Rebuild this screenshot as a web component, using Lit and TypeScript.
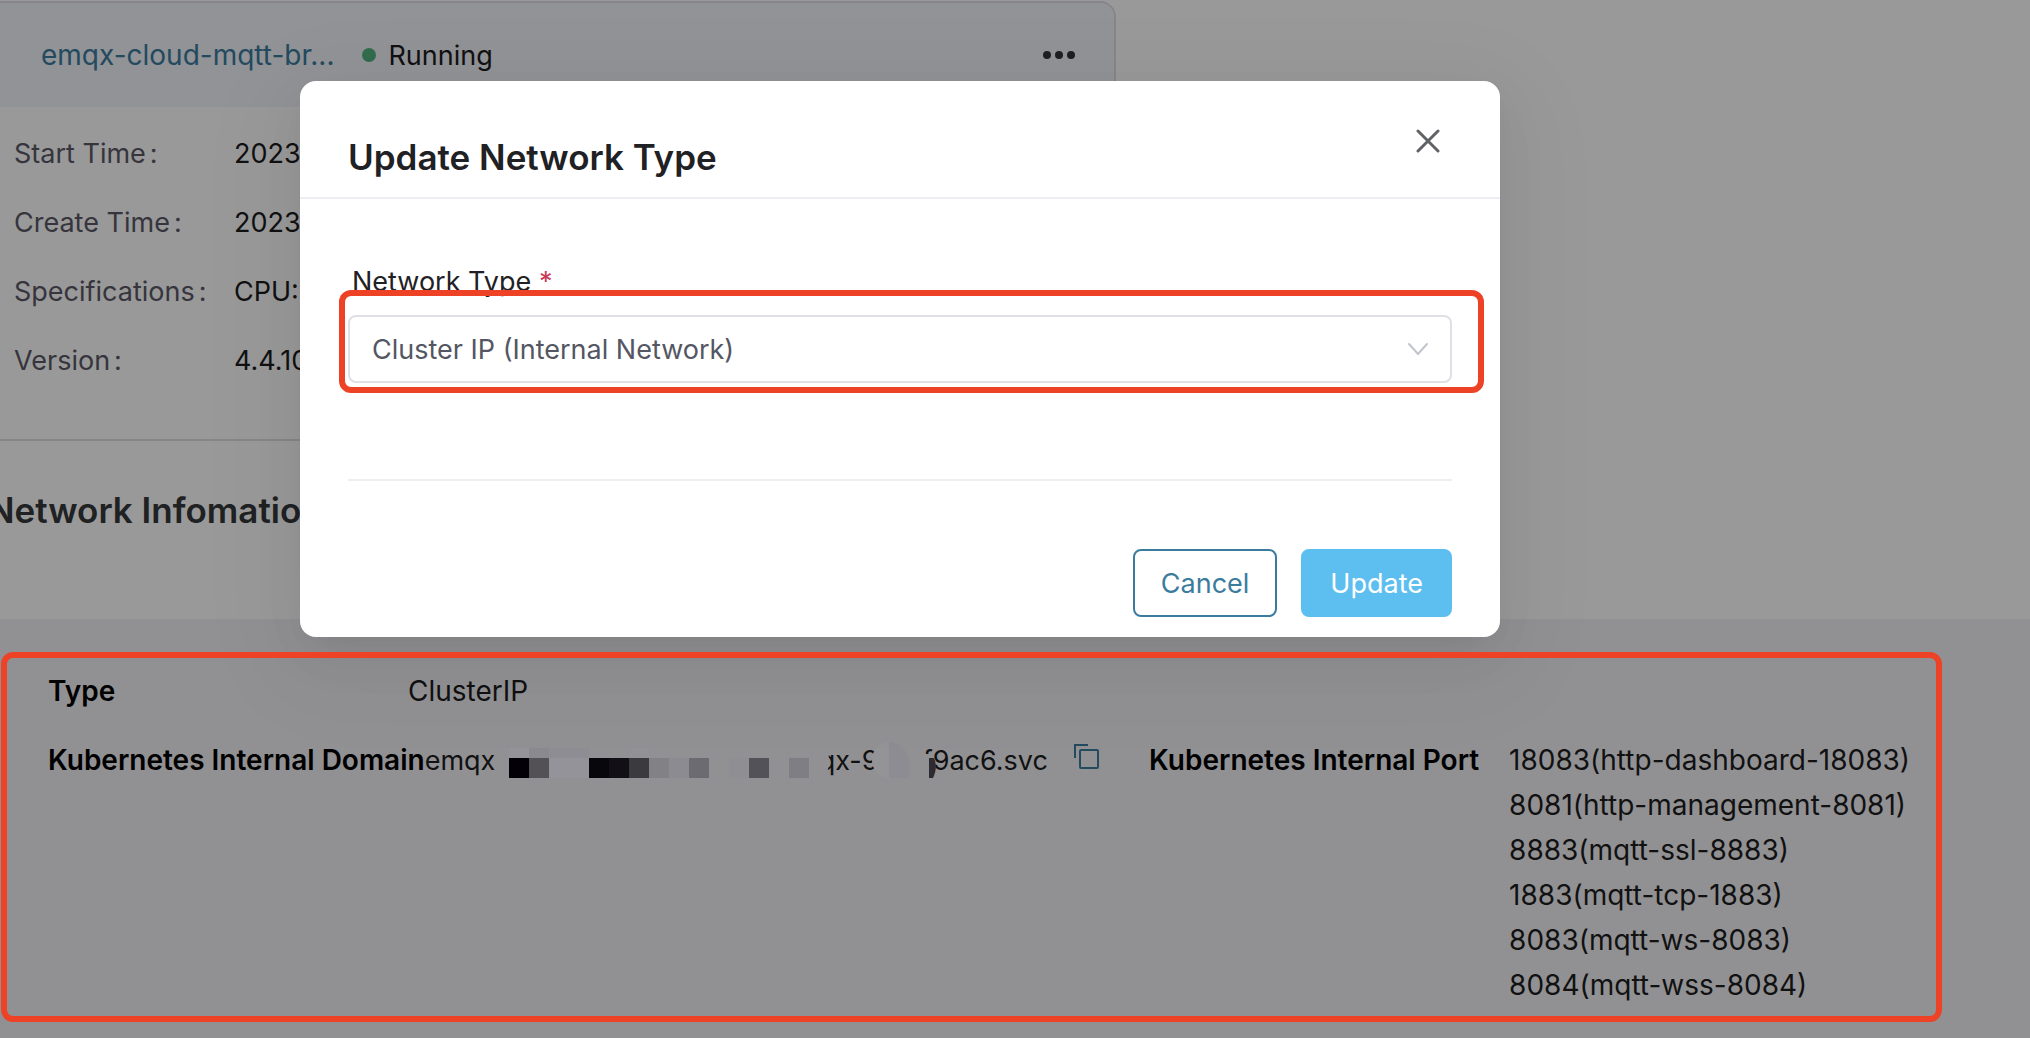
import { LitElement, html, svg, css } from "lit";
import { customElement } from "lit/decorators.js";

const FACTS: [string, string][] = [
  ["Start Time", "2023"],
  ["Create Time", "2023"],
  ["Specifications", "CPU:"],
  ["Version", "4.4.10"],
];

const PORTS = [
  "18083(http-dashboard-18083)",
  "8081(http-management-8081)",
  "8883(mqtt-ssl-8883)",
  "1883(mqtt-tcp-1883)",
  "8083(mqtt-ws-8083)",
  "8084(mqtt-wss-8084)",
];

/* Redaction tiles: x, y, width, height, fill */
const TILES: [number, number, number, number, string][] = [
  [84, 10, 20, 10, "#f7f5ff"],
  [104, 10, 20, 10, "#e6e4ee"],
  [124, 10, 40, 10, "#edebf7"],
  [204, 10, 20, 10, "#f4f2fb"],
  [84, 20, 20, 20, "#05030c"],
  [104, 20, 20, 20, "#8a878f"],
  [124, 20, 40, 20, "#f7f5ff"],
  [164, 20, 20, 20, "#0d0c14"],
  [184, 20, 20, 20, "#1e1c26"],
  [204, 20, 20, 20, "#626169"],
  [224, 20, 20, 20, "#d9d7df"],
  [244, 20, 20, 20, "#e9e8f2"],
  [264, 20, 20, 20, "#b4b2bc"],
  [304, 20, 20, 20, "#ededf5"],
  [324, 20, 20, 20, "#8a8993"],
  [364, 20, 20, 20, "#d4d2dc"],
];

@customElement("app-root")
export class AppRoot extends LitElement {
  static styles = css`
    :host {
      display: block;
      position: relative;
      min-height: 100vh;
      overflow: hidden;
      background: #fff;
      color: #1d1d1f;
      font: 28px/45px Inter, "Liberation Sans", sans-serif;
    }
    * { box-sizing: border-box; }
    .page { display: flex; flex-direction: column; min-height: 100vh; }
    .card {
      width: 56%;
      margin: 1px 0 0 -21px;
      border: 2px solid #dfdfe6;
      border-radius: 16px;
      overflow: hidden;
    }
    .card-head {
      display: flex;
      align-items: center;
      height: 104px;
      padding: 0 38px 0 60px;
      background: #f2f5fa;
    }
    .name { color: #3b7c9e; text-decoration: none; }
    .status {
      display: flex;
      align-items: center;
      gap: 12px;
      margin-left: 28px;
      font-size: 27px;
    }
    .status::before {
      content: "";
      width: 14px;
      height: 14px;
      border-radius: 50%;
      background: #56b381;
    }
    .icon-button { display: flex; padding: 0; border: 0; background: none; }
    .more { margin-left: auto; }
    .facts {
      display: grid;
      grid-template-columns: 220px 1fr;
      row-gap: 24px;
      margin: 0;
      padding: 24px 33px 56px;
      font-size: 27px;
    }
    .facts dt { color: #5a5966; }
    .facts dt::after { content: ":"; margin-left: 4px; }
    dd { margin: 0; }
    h2 { margin: 0; font-size: 35px; line-height: 45px; font-weight: 600; }
    .section-title { margin: 47px 0 0 -12px; color: #34373a; }
    .network {
      flex: 1;
      display: grid;
      grid-template-columns: 5fr 4fr;
      grid-template-rows: auto 1fr;
      row-gap: 24px;
      margin: 86px 0 0;
      padding: 50px 0 0 48px;
      background: #f2f2f5;
    }
    .pair { display: flex; white-space: nowrap; }
    .pair dt { flex: 0 0 auto; min-width: 360px; font-weight: 600; color: #000; }
    .wide { grid-column: 1 / -1; }
    .domain { display: flex; align-items: flex-start; position: relative; font-size: 27px; }
    .part-first { width: 394px; }
    .part-second { width: 104px; }
    .tiles { position: absolute; top: 0; left: 0; }
    .copy { margin: 6px 0 0 26px; }
    .ports { margin: 0; padding: 0; list-style: none; }
    .scrim { position: absolute; inset: 0; background: rgba(0, 0, 0, 0.4); }
    .modal {
      position: absolute;
      top: 81px;
      left: 300px;
      right: 530px;
      border-radius: 16px;
      background: #fff;
      font-size: 27px;
      box-shadow:
        0 12px 32px -16px rgba(0, 0, 0, 0.08),
        0 18px 56px rgba(0, 0, 0, 0.05),
        0 24px 96px 32px rgba(0, 0, 0, 0.03);
    }
    .modal-head {
      display: flex;
      justify-content: space-between;
      align-items: flex-start;
      padding: 48px 60px 18px 48px;
      height: 118px;
      border-bottom: 2px solid #ededf5;
    }
    .modal-head h2 { margin-top: 6px; color: #1f2124; }
    .modal-body { padding: 60px 48px 20px; }
    .label { display: block; padding-left: 4px; color: #1f2124; }
    .star { color: #c93a56; }
    .field { position: relative; margin-top: 11px; }
    select {
      appearance: none;
      display: block;
      width: 100%;
      height: 68px;
      padding: 0 80px 0 22px;
      border: 2px solid #dfdfe6;
      border-radius: 8px;
      background: #fff;
      color: #545663;
      font: inherit;
    }
    .chevron { position: absolute; right: 23px; top: 27px; pointer-events: none; }
    .mark { position: absolute; border: 6px solid #ed4226; border-radius: 12px; pointer-events: none; }
    .mark-field { inset: -25px -32px -10px -9px; }
    .mark-network { top: 652px; right: 88px; bottom: 16px; left: 1px; }
    .actions {
      display: flex;
      justify-content: flex-end;
      gap: 24px;
      margin-top: 96px;
      padding-top: 68px;
      border-top: 2px solid #ededf2;
    }
    .action {
      height: 68px;
      padding: 0 26px;
      border: 2px solid #3b7c9e;
      border-radius: 8px;
      background: #fff;
      color: #3b7c9e;
      font: inherit;
    }
    .primary { padding: 0 27px; border-color: #5dbef0; background: #5dbef0; color: #fff; }
  `;

  render() {
    return html`
      <main class="page">
        <section class="card">
          <header class="card-head">
            <a class="name" href="#">emqx-cloud-mqtt-br...</a>
            <span class="status">Running</span>
            <button class="icon-button more" aria-label="More">
              <svg width="34" height="10" viewBox="0 0 34 10" fill="#333538">
                <circle cx="5" cy="5" r="4" /><circle cx="17" cy="5" r="4" /><circle cx="29" cy="5" r="4" />
              </svg>
            </button>
          </header>
          <dl class="facts">${FACTS.map(([k, v]) => html`<dt>${k}</dt><dd>${v}</dd>`)}</dl>
        </section>
        <h2 class="section-title">Network Infomation</h2>
        <dl class="network">
          <div class="pair wide"><dt>Type</dt><dd>ClusterIP</dd></div>
          <div class="pair">
            <dt>Kubernetes Internal Domain</dt>
            <dd class="domain">
              <span class="part-first">emqx</span>
              <span class="part-second">qx-9</span>
              <span>f9ac6.svc</span>
              <svg class="tiles" width="520" height="45" viewBox="0 0 520 45" aria-hidden="true">
                ${TILES.map(([x, y, w, h, fill]) => svg`<rect x=${x} y=${y} width=${w} height=${h} fill=${fill} />`)}
                <path d="M384 8h14c4 3 6 8 6 14s-1 14-6 18h-14z" fill="#f2f2f5" />
                <path d="M464 4a17 18 0 0 0 0 36z" fill="#f7f6fe" />
                <path d="M464 4c10 0 17 7 20 16v20h-20z" fill="#ebeaf3" />
                <path d="M484 16h24v26h-24z" fill="#f2f2f5" />
                <path d="M504 20h5c3 7 2 14-1 20h-4z" fill="#4b4952" />
              </svg>
              <button class="icon-button copy" aria-label="Copy">
                <svg width="26" height="26" viewBox="0 0 26 26" fill="none" stroke="#3b7c9e" stroke-width="2">
                  <path d="M1 14V1h13" /><rect x="6" y="6" width="18" height="18" rx="1" />
                </svg>
              </button>
            </dd>
          </div>
          <div class="pair">
            <dt>Kubernetes Internal Port</dt>
            <dd><ul class="ports">${PORTS.map((p) => html`<li>${p}</li>`)}</ul></dd>
          </div>
        </dl>
      </main>
      <div class="scrim"></div>
      <section class="modal" role="dialog" aria-labelledby="title">
        <header class="modal-head">
          <h2 id="title">Update Network Type</h2>
          <button class="icon-button" aria-label="Close">
            <svg width="24" height="24" viewBox="0 0 24 24" stroke="#606266" stroke-width="3" stroke-linecap="round">
              <path d="M2 2l20 20M22 2L2 22" />
            </svg>
          </button>
        </header>
        <div class="modal-body">
          <label class="label" for="type">Network Type <span class="star">*</span></label>
          <div class="field">
            <select id="type"><option>Cluster IP (Internal Network)</option></select>
            <svg class="chevron" width="22" height="14" viewBox="0 0 22 14" fill="none" stroke="#c0c4cc" stroke-width="2" stroke-linecap="round">
              <path d="M2 2l9 10 9-10" />
            </svg>
            <div class="mark mark-field"></div>
          </div>
          <div class="actions">
            <button class="action">Cancel</button>
            <button class="action primary">Update</button>
          </div>
        </div>
      </section>
      <div class="mark mark-network"></div>
    `;
  }
}
